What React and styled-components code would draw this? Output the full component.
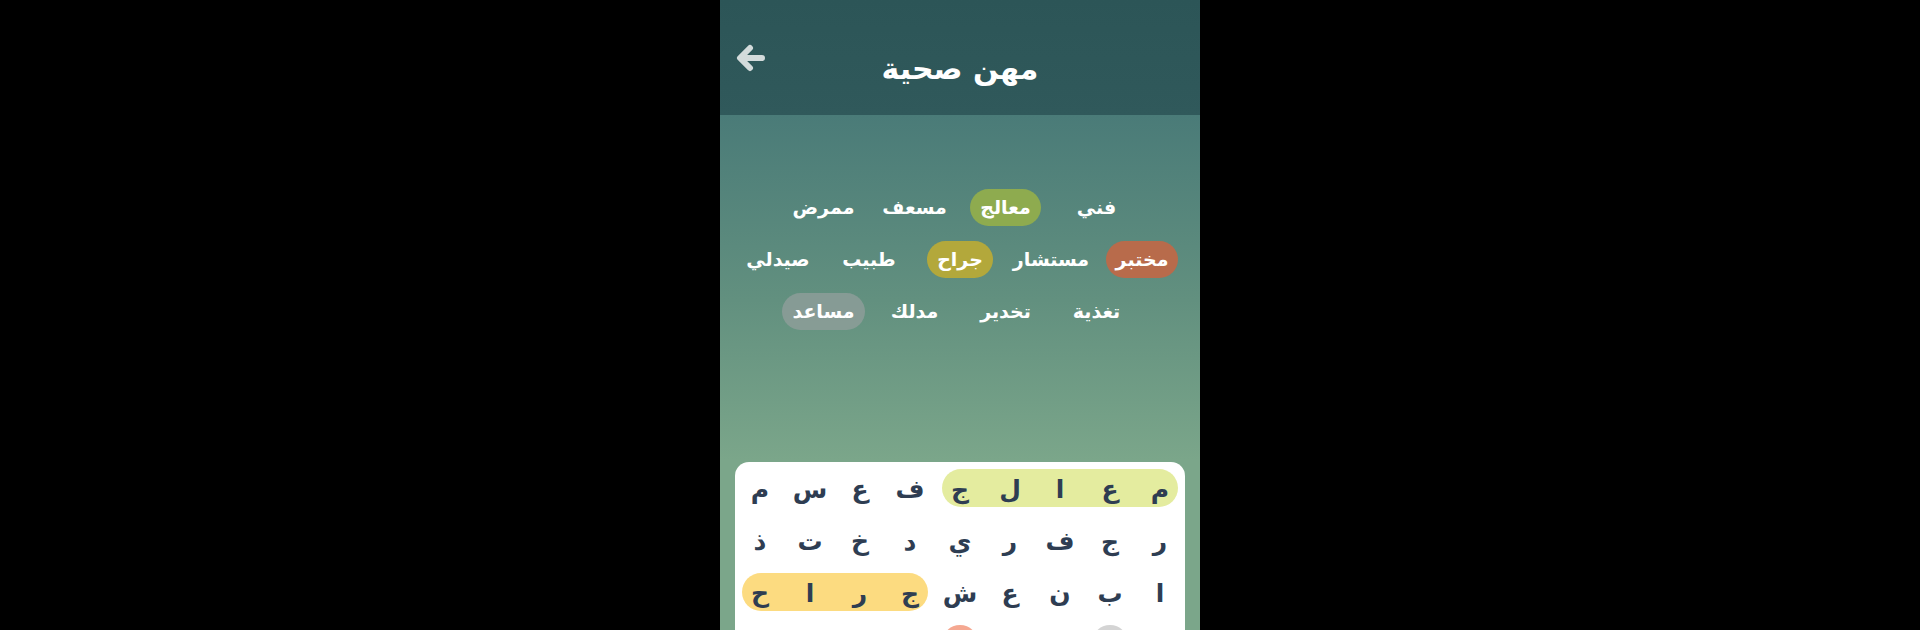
import React from 'react'
import styled, { createGlobalStyle } from 'styled-components'

const Global = createGlobalStyle`
  html, body { margin: 0; padding: 0; background: #000; }
  body { font-family: "DejaVu Sans", "Noto Sans", sans-serif; }
`

const Page = styled.div`
  width: 100vw; height: 630px;
  background: #000;
  display: flex; justify-content: center;
  overflow: hidden;
`

const Phone = styled.div`
  width: 480px; height: 630px;
  display: flex; flex-direction: column;
  background: linear-gradient(180deg, #4a7b78 0px, #4a7b78 115px, #62907f 300px, #7ba68a 460px, #7ba68a 630px);
  overflow: hidden;
`

const Header = styled.header`
  height: 115px; flex-shrink: 0;
  background: linear-gradient(180deg, #2c5557 0%, #30595b 100%);
  display: grid;
  grid-template-columns: 70px 1fr 70px;
`

const BackButton = styled.button`
  grid-column: 1;
  align-self: start;
  margin: 41px 0 0 13px;
  width: 34px; height: 34px;
  padding: 0; border: none; background: none;
  display: flex; align-items: center; justify-content: center;
`

const Title = styled.h1`
  grid-column: 2;
  margin: 0; padding-top: 22px;
  display: flex; align-items: center; justify-content: center;
  color: #fff;
  font-size: 30px; font-weight: bold;
  direction: rtl;
`

const Words = styled.div`
  margin-top: 66px;
  display: flex; flex-direction: column; align-items: center;
  direction: rtl;
`

const WordRow = styled.div`
  display: flex; justify-content: center;
`

const Word = styled.div`
  width: 91px; height: 52px;
  display: flex; align-items: center; justify-content: center;
`

const WordLabel = styled.span`
  height: 37px;
  padding: 0 10px;
  border-radius: 19px;
  display: flex; align-items: center;
  color: #fff;
  font-size: 19px; font-weight: bold;
  background: ${p => p.$bg || 'transparent'};
`

const Board = styled.div`
  margin: 125px 15px 0;
  background: #fff;
  border-radius: 14px 14px 0 0;
  display: grid;
  grid-template-columns: repeat(9, 50px);
  grid-auto-rows: 52px;
  direction: rtl;
`

const Mark = styled.div`
  grid-row: ${p => p.$row};
  grid-column: ${p => p.$from} / ${p => p.$to};
  margin: 7px 7px;
  border-radius: 19px;
  background: ${p => p.$bg};
  z-index: 0;
`

const Cell = styled.div`
  grid-row: ${p => p.$row};
  grid-column: ${p => p.$col};
  display: flex; align-items: center; justify-content: center;
  color: #2e3d52;
  font-size: 25px; font-weight: bold;
  padding-top: 2px;
  z-index: 1;
`

const wordRows = [
  [['فني'], ['معالج', '#8eab4f'], ['مسعف'], ['ممرض']],
  [['مختبر', '#b86b4b'], ['مستشار'], ['جراح', '#b3a83b'], ['طبيب'], ['صيدلي']],
  [['تغذية'], ['تخدير'], ['مدلك'], ['مساعد', 'rgba(150,160,158,0.7)']],
]

const grid = [
  ['م', 'ع', 'ا', 'ل', 'ج', 'ف', 'ع', 'س', 'م'],
  ['ر', 'ج', 'ف', 'ر', 'ي', 'د', 'خ', 'ت', 'ذ'],
  ['ا', 'ب', 'ن', 'ع', 'ش', 'ج', 'ر', 'ا', 'ح'],
  ['خ', 'م', 'ط', 'ب', 'ص', 'ي', 'ل', 'ك', 'ر'],
]

const marks = [
  { row: 1, from: 1, to: 6, bg: '#e4ec9f' },
  { row: 3, from: 6, to: 10, bg: '#fcdb80' },
  { row: 4, from: 2, to: 3, bg: '#d4d4d4' },
  { row: 4, from: 5, to: 6, bg: '#f5a891' },
]

function ArrowLeft() {
  return (
    <svg width="30" height="30" viewBox="0 0 30 30">
      <path d="M27 15 H6 M15 5 L5 15 L15 25" stroke="#d3dbdb" strokeWidth="6"
        strokeLinecap="round" strokeLinejoin="round" fill="none" />
    </svg>
  )
}

export default function App() {
  return (
    <Page>
      <Global />
      <Phone>
        <Header>
          <BackButton aria-label="back"><ArrowLeft /></BackButton>
          <Title>مهن صحية</Title>
        </Header>
        <Words>
          {wordRows.map((row, i) => (
            <WordRow key={i}>
              {row.map(([w, bg]) => (
                <Word key={w}><WordLabel $bg={bg}>{w}</WordLabel></Word>
              ))}
            </WordRow>
          ))}
        </Words>
        <Board>
          {marks.map((m, i) => (
            <Mark key={i} $row={m.row} $from={m.from} $to={m.to} $bg={m.bg} />
          ))}
          {grid.map((row, r) => row.map((ch, c) => (
            <Cell key={r + '-' + c} $row={r + 1} $col={c + 1}>{ch}</Cell>
          )))}
        </Board>
      </Phone>
    </Page>
  )
}
